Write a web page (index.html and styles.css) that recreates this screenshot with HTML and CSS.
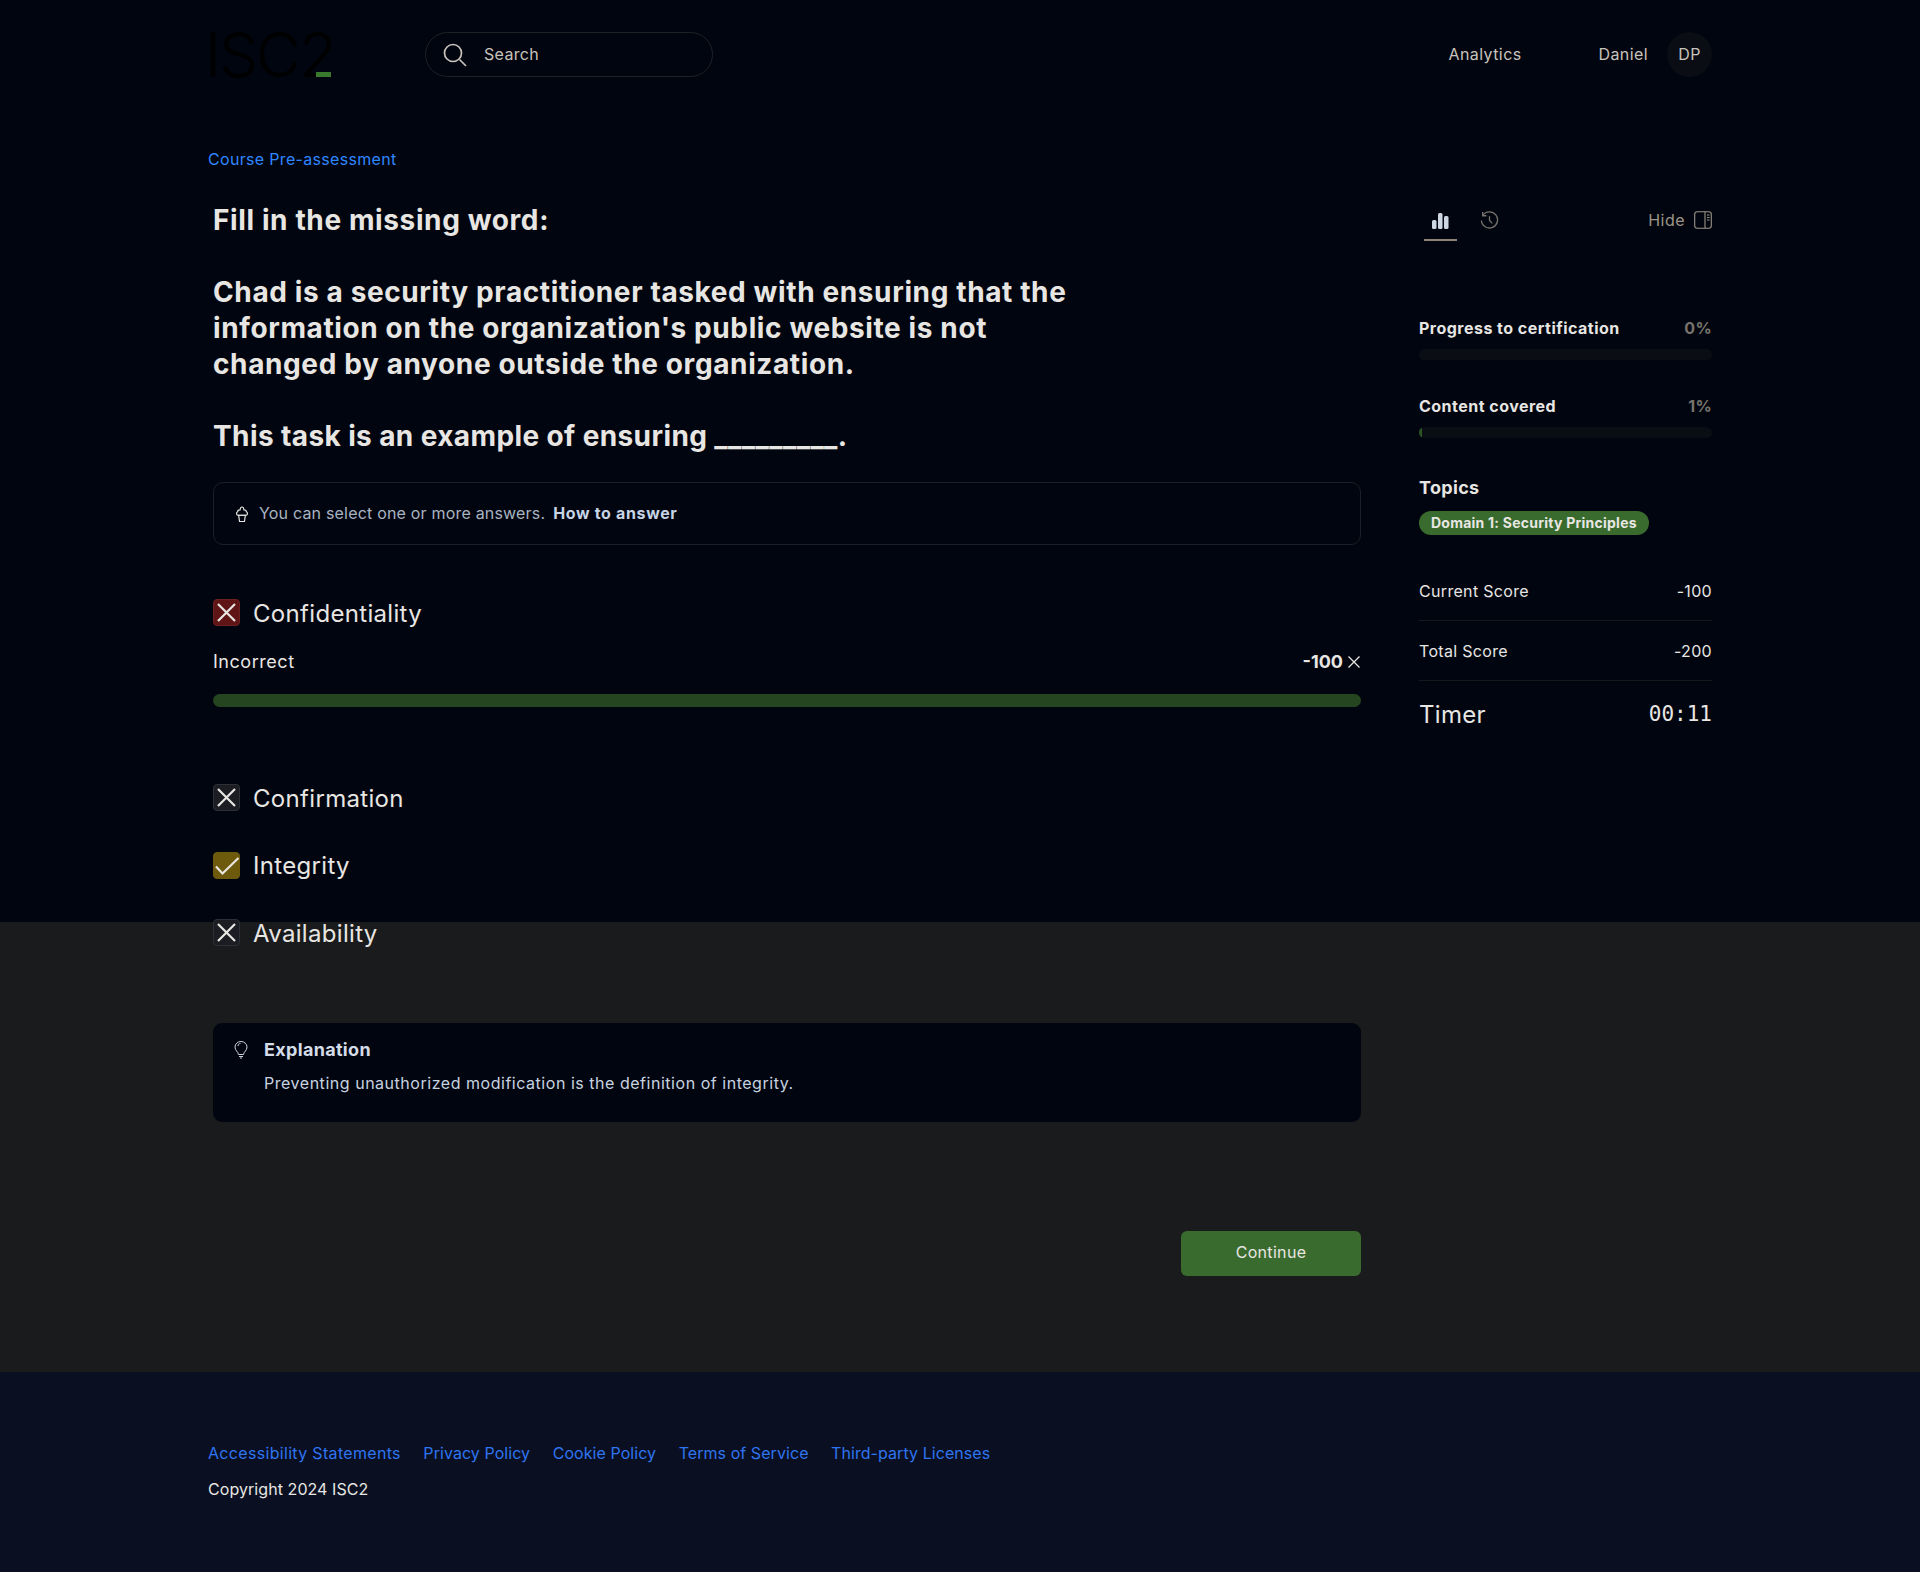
FILE: index.html
```html
<!DOCTYPE html>
<html lang="en">
<head>
<meta charset="utf-8">
<title>Course Pre-assessment</title>
<link rel="stylesheet" href="styles.css">
</head>
<body>
<div class="wrap">
  <header class="header">
    <div class="logo">ISC2</div>
    <div class="search">
      <svg class="search-icon" viewBox="0 0 24 24"><circle cx="10" cy="10" r="8.500"/><path d="M16.500 16.500l6.500 6.500"/></svg>
      <span class="lift">Search</span>
    </div>
    <nav class="nav">
      <a class="nav-link lift">Analytics</a>
      <a class="nav-name lift">Daniel</a>
      <span class="avatar"><span class="lift">DP</span></span>
    </nav>
  </header>
  <a class="eyebrow">Course Pre-assessment</a>
  <div class="layout">
    <main class="main">
      <div class="question">
        <p>Fill in the missing word:</p>
        <p>Chad is a security practitioner tasked with ensuring that the<br>information on the organization's public website is not<br>changed by anyone outside the organization.</p>
        <p class="question-last">This task is an example of ensuring _________.</p>
      </div>
      <div class="hint">
        <svg class="hint-icon" viewBox="0 1 14 16.500"><path d="M3.500 10.500h7l-1 6.500h-5z"/><path d="M2.500 10.500c-1.500-.5-1.500-3 0-3.500 0-2 1.500-2 2.500-2 .5-4 3.500-4 4 0 1 0 2.500 .5 2.500 2 1.500 .5 1.500 3 0 3.500z"/></svg>
        <span class="hint-text lift">You can select one or more answers.</span>
        <a class="hint-link lift">How to answer</a>
      </div>
      <div class="option option-first">
        <span class="box box-red"><svg viewBox="0 0 25 25"><path d="M4 4l17 17M21 4L4 21"/></svg></span>
        <span class="drop">Confidentiality</span>
      </div>
      <div class="result">
        <span>Incorrect</span>
        <span class="result-score"><b>-100</b><svg viewBox="0 0 14 14"><path d="M1.500 1.500l11 11M12.500 1.500l-11 11"/></svg></span>
      </div>
      <div class="result-bar"></div>
      <div class="options">
        <div class="option">
          <span class="box"><svg viewBox="0 0 25 25"><path d="M4 4l17 17M21 4L4 21"/></svg></span>
          <span class="drop">Confirmation</span>
        </div>
        <div class="option">
          <span class="box box-gold"><svg viewBox="0 0 25 25"><path d="M2 13.500l6.500 7L24.500 5"/></svg></span>
          <span>Integrity</span>
        </div>
        <div class="option">
          <span class="box"><svg viewBox="0 0 25 25"><path d="M4 4l17 17M21 4L4 21"/></svg></span>
          <span class="drop">Availability</span>
        </div>
      </div>
      <section class="explain">
        <svg class="explain-icon" viewBox="0 0 14 18"><path d="M4.500 13.500C4 10.500 1 9.500 1 6a6 5.500 0 0 1 12 0c0 3.500-3 4.500-3.500 7.500z"/><path d="M5 15.500h4M6 17h2M4 5c0-1.500 1-2.500 2.500-2.500"/></svg>
        <div>
          <h2 class="explain-title">Explanation</h2>
          <p class="explain-text">Preventing unauthorized modification is the definition of integrity.</p>
        </div>
      </section>
      <div class="actions"><button class="continue">Continue</button></div>
    </main>
    <aside class="side">
      <div class="tabs">
        <span class="tab tab-active">
          <svg class="tab-chart" viewBox="0 0 17 16"><rect x="0" y="7" width="4.500" height="9" rx="1.500"/><rect x="6" y="0" width="4.500" height="16" rx="1.500"/><rect x="12" y="3" width="4.500" height="13" rx="1.500"/></svg>
        </span>
        <span class="tab">
          <svg class="tab-history" viewBox="0 0 20 20"><path d="M3 4.500A8.500 8.500 0 1 1 1.500 10"/><path d="M2.800 1v4h4M10 5.500V10l3 3"/></svg>
        </span>
        <span class="hide">Hide
          <svg class="hide-icon" viewBox="0 0 18 18"><rect x=".7" y=".7" width="16.600" height="16.600" rx="2.500"/><path d="M11 .7v16.600M13 4h2.500M13 6.500h2.500M13 9h2.500"/></svg>
        </span>
      </div>
      <div class="metric metric-first"><b>Progress to certification</b><span>0%</span></div>
      <div class="track"></div>
      <div class="metric metric-next"><b>Content covered</b><span>1%</span></div>
      <div class="track"><div class="fill" style="width:1%"></div></div>
      <h3 class="topics">Topics</h3>
      <span class="pill">Domain 1: Security Principles</span>
      <div class="score score-first"><span>Current Score</span><span>-100</span></div>
      <div class="score"><span>Total Score</span><span>-200</span></div>
      <div class="timer"><span>Timer</span><span class="clock">00:11</span></div>
    </aside>
  </div>
</div>
<footer class="footer">
  <div class="footer-links">
    <a class="footer-wide">Accessibility Statements</a>
    <a>Privacy Policy</a>
    <a>Cookie Policy</a>
    <a>Terms of Service</a>
    <a>Third-party Licenses</a>
  </div>
  <p class="copyright">Copyright 2024 ISC2</p>
</footer>
</body>
</html>
```
FILE: styles.css
```css
* { box-sizing: border-box; }
html, body { margin: 0; padding: 0; }
body {
  min-height: 1572px;
  background: linear-gradient(#01050f 922px, #1a1b1c 922px);
  color: #e8e6e3;
  font-family: Inter, "Liberation Sans", sans-serif;
  font-size: 16px;
  letter-spacing: .02em;
}
p, h2, h3 { margin: 0; }
svg { display: block; fill: none; stroke: currentColor; }
.wrap { width: 1504px; margin-left: 208px; }
.lift { padding-bottom: 2px; }
.drop { padding-top: 2px; }

.header { height: 109px; display: flex; align-items: center; }
.logo {
  position: relative;
  width: 220px;
  height: 45px;
  margin-left: -3px;
  font-size: 62px;
  line-height: 45px;
  font-weight: 300;
  letter-spacing: -.035em;
  color: #000;
}
.logo::after {
  content: "";
  position: absolute;
  left: 111px;
  top: 40px;
  width: 15px;
  height: 5px;
  background: #3a7a2e;
}
.search {
  width: 288px;
  height: 45px;
  display: flex;
  align-items: center;
  gap: 17px;
  padding-left: 17px;
  border: 1px solid #1e2126;
  border-radius: 23px;
  color: #c8c3bc;
}
.search-icon { width: 24px; height: 24px; stroke-width: 1.7; }
.nav { margin-left: auto; display: flex; align-items: center; color: #c8c3bc; letter-spacing: .025em; }
.nav-link { margin-right: 77px; }
.nav-name { margin-right: 19px; }
.avatar {
  width: 45px;
  height: 45px;
  display: flex;
  align-items: center;
  justify-content: center;
  border-radius: 50%;
  background: #0a0d14;
}

.eyebrow { display: block; margin-top: 38px; line-height: 24px; color: #2f86ff; }
.layout { display: grid; grid-template-columns: 1153px 293px; column-gap: 58px; margin-top: 31px; }
.main { padding-left: 5px; }

.question { font-size: 28px; line-height: 36px; font-weight: 700; letter-spacing: .022em; display: flex; flex-direction: column; gap: 36px; }
.question-last { letter-spacing: .014em; }

.hint {
  height: 63px;
  margin-top: 28px;
  padding-left: 21px;
  display: flex;
  align-items: center;
  border: 1px solid #1c1f25;
  border-radius: 10px;
}
.hint-icon { width: 14px; height: 16px; margin-right: 10px; stroke-width: 1.2; }
.hint-text { color: #a9b4c2; letter-spacing: .012em; }
.hint-link { margin-left: 8px; font-weight: 700; color: #c6d4e6; letter-spacing: .04em; }

.option { display: flex; align-items: center; gap: 13px; height: 27px; font-size: 24px; }
.option-first { margin-top: 54px; }
.box {
  width: 27px;
  height: 27px;
  flex: none;
  border-radius: 4px;
  background: #1b1d22;
  border: 1px solid #2d3036;
}
.box svg { width: 25px; height: 25px; stroke-width: 2.2; stroke: #e8e6e3; }
.box-red { background: #5f1515; border-color: #6d2020; }
.box-gold { background: #6e5a0c; border-color: #6e5a0c; }

.result { height: 26px; padding-top: 2px; margin-top: 22px; display: flex; justify-content: space-between; align-items: center; font-size: 18px; line-height: 24px; letter-spacing: .03em; }
.result-score { display: flex; align-items: center; gap: 4px; }
.result-score b { letter-spacing: 0; }
.result-score svg { width: 14px; height: 14px; stroke-width: 1.3; }
.result-bar { height: 13px; margin-top: 20px; border-radius: 7px; background: #254520; }
.options { margin-top: 77px; display: flex; flex-direction: column; gap: 40.5px; }

.explain {
  height: 99px;
  margin-top: 77px;
  display: flex;
  gap: 16px;
  padding: 17px 0 0 21px;
  border-radius: 9px;
  background: #01050f;
}
.explain-icon { width: 14px; height: 18px; margin-top: 1px; flex: none; stroke-width: 1; color: #c8d3e0; }
.explain-title { font-size: 18px; line-height: 20px; font-weight: 700; color: #d4dce8; }
.explain-text { margin-top: 13px; font-size: 16px; line-height: 20px; color: #c8d3e0; letter-spacing: .033em; }

.actions { margin-top: 109px; margin-bottom: 96px; display: flex; justify-content: flex-end; }
.continue {
  width: 180px;
  height: 45px;
  padding: 0 0 3px;
  border: 0;
  border-radius: 6px;
  background: #3a6b2e;
  color: #e8e6e3;
  font: inherit;
  letter-spacing: inherit;
}

.tabs { height: 39px; display: flex; align-items: flex-start; }
.tab { width: 33px; height: 39px; margin-left: 5px; padding-top: 8px; display: flex; justify-content: center; }
.tab-active { border-bottom: 2px solid #8f8577; color: #cdd7e3; }
.tab + .tab { margin-left: 22px; width: 20px; padding-top: 9px; color: #77736b; }
.tab-chart { width: 17px; height: 16px; margin-top: 3px; fill: currentColor; stroke: none; }
.tab-history { width: 19px; height: 19px; stroke-width: 1.4; }
.hide { margin-left: auto; display: flex; align-items: center; gap: 9px; height: 36px; color: #9b9588; letter-spacing: .03em; }
.hide-icon { width: 18px; height: 18px; stroke-width: 1.1; }

.metric { display: flex; justify-content: space-between; line-height: 20px; }
.metric b { letter-spacing: .03em; }
.metric span { font-weight: 700; color: #77736b; }
.metric-first { margin-top: 77px; }
.metric-next { margin-top: 36px; }
.track { height: 11px; margin-top: 11px; border-radius: 6px; background: #0a0d14; overflow: hidden; }
.fill { height: 100%; background: #2b5524; }

.topics { margin-top: 38px; font-size: 18px; line-height: 24px; font-weight: 700; }
.pill {
  display: inline-block;
  height: 24px;
  margin-top: 11px;
  padding: 0 12px;
  border-radius: 12px;
  background: #3a6b2e;
  font-size: 14px;
  line-height: 24px;
  font-weight: 700;
  letter-spacing: .017em;
}
.score { height: 60px; display: flex; justify-content: space-between; align-items: center; border-bottom: 1px solid #15181d; }
.score-first { margin-top: 26px; }
.timer { height: 66px; display: flex; justify-content: space-between; align-items: center; font-size: 24px; }
.clock { font-family: "DejaVu Sans Mono", monospace; font-size: 21px; letter-spacing: 0; }

.footer { height: 200px; padding: 69px 0 0 208px; background: #0a1022; }
.footer-links { display: flex; gap: 22.500px; line-height: 24px; color: #2f74f0; letter-spacing: .004em; }
.footer-wide { letter-spacing: .02em; }
.copyright { margin-top: 12px; line-height: 24px; letter-spacing: .004em; }
```
